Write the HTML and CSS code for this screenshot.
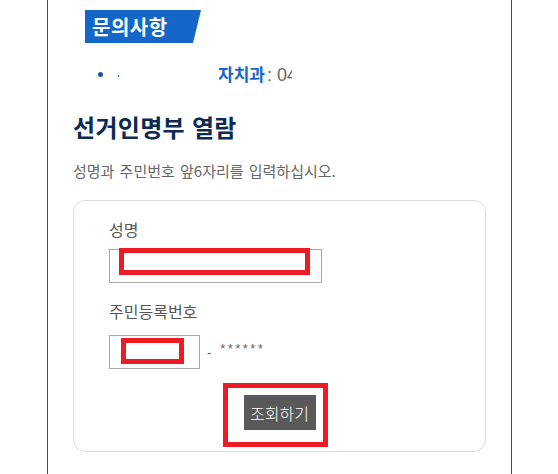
FILE: index.html
```html
<!DOCTYPE html>
<html lang="ko">
<head>
<meta charset="utf-8">
<title>선거인명부 열람</title>
<link rel="stylesheet" href="styles.css">
</head>
<body>
<div class="page">
  <div class="badge">문의사항</div>
  <ul class="info">
    <li class="info-item">
      <span class="bullet"></span>
      <span class="tiny-dot"></span>
      <span class="dept-clip"><span class="dept">자치과</span></span>
      <span class="tel-clip"><span class="tel">: 04</span></span>
    </li>
  </ul>
  <h1 class="title">선거인명부 열람</h1>
  <p class="desc">성명과 주민번호 앞6자리를 입력하십시오.</p>
  <div class="card">
    <div class="field">
      <label class="label">성명</label>
      <div class="input-wrap">
        <div class="input input-name"></div>
        <span class="mark mark-name"></span>
      </div>
    </div>
    <div class="field field-jumin">
      <label class="label">주민등록번호</label>
      <div class="jumin-row">
        <div class="input-wrap">
          <div class="input input-jumin"></div>
          <span class="mark mark-jumin"></span>
        </div>
        <span class="dash">-</span>
        <span class="stars">******</span>
      </div>
    </div>
    <div class="actions">
      <div class="btn-wrap">
        <button class="btn" type="button">조회하기</button>
        <span class="mark mark-btn"></span>
      </div>
    </div>
  </div>
</div>
</body>
</html>
```

FILE: styles.css
```css
* { box-sizing: border-box; }
html, body { margin: 0; padding: 0; background: #fff; }
body {
  font-family: "Noto Sans CJK KR", "Noto Sans", sans-serif;
  color: #555;
}
.page {
  margin-left: 47px;
  width: 465px;
  min-height: 474px;
  border-left: 1px solid #4f4f5a;
  border-right: 1px solid #4f4f5a;
  padding: 10px 0 0 25px;
}
.badge {
  display: block;
  margin-left: 12px;
  width: 116px;
  height: 33px;
  line-height: 33px;
  padding-left: 7px;
  background: #1467c8;
  color: #fff;
  font-size: 20px;
  font-weight: 700;
  letter-spacing: 0.5px;
  clip-path: polygon(0 0, 100% 0, calc(100% - 8px) 100%, 0 100%);
}
.info {
  list-style: none;
  margin: 19px 0 0 0;
  padding: 0;
}
.info-item {
  display: flex;
  align-items: center;
  height: 24px;
  font-size: 16px;
  line-height: 24px;
}
.bullet {
  width: 5px;
  height: 5px;
  border-radius: 50%;
  background: #1f4fb0;
  margin-left: 25px;
}
.tiny-dot {
  width: 1px;
  height: 2px;
  background: #1f4fb0;
  margin-left: 15px;
  margin-top: 4px;
}
.dept-clip {
  display: inline-block;
  overflow: hidden;
  margin-left: 100px;
  white-space: nowrap;
}
.dept {
  display: inline-block;
  color: #1467c8;
  font-weight: 700;
  font-size: 17px;
  margin-left: -1px;
}
.tel-clip {
  display: inline-block;
  width: 27px;
  overflow: hidden;
  white-space: nowrap;
}
.tel {
  font-family: "Liberation Sans", sans-serif;
  color: #666;
  font-size: 18px;
  padding-left: 2px;
}
.title {
  margin: 25px 0 0 0;
  font-size: 24px;
  line-height: 32px;
  font-weight: 700;
  color: #0c2a52;
  letter-spacing: 0.3px;
}
.desc {
  margin: 18px 0 0 0;
  font-size: 15px;
  line-height: 20px;
  color: #666;
  word-spacing: 1px;
}
.card {
  margin-top: 19px;
  width: 413px;
  height: 252px;
  border: 1px solid #dcdcdc;
  border-radius: 12px;
  padding: 18px 0 0 35px;
}
.label {
  display: block;
  font-size: 16px;
  line-height: 20px;
  color: #555;
}
.input-wrap {
  position: relative;
  display: inline-block;
}
.input {
  border: 1px solid #aaa;
  height: 34px;
  background: #fff;
}
.field .input-wrap { margin-top: 10px; }
.input-name { width: 213px; }
.field-jumin { margin-top: 13px; }
.jumin-row {
  display: flex;
  align-items: center;
}
.jumin-row .input-wrap { margin-top: 14px; }
.input-jumin { width: 91px; }
.dash {
  margin-left: 7px;
  margin-top: 14px;
  font-size: 13px;
  color: #555;
  font-family: "Liberation Sans", sans-serif;
}
.stars {
  margin-left: 9px;
  margin-top: 6px;
  font-size: 13px;
  color: #666;
  letter-spacing: 2.4px;
  font-family: "Liberation Sans", sans-serif;
}
.actions {
  display: flex;
  justify-content: center;
  padding-right: 35px;
  margin-top: 26px;
}
.btn-wrap {
  position: relative;
}
.btn {
  display: block;
  width: 72px;
  height: 35px;
  border: 0;
  background: #595959;
  color: #fff;
  font-family: "Noto Sans CJK KR", sans-serif;
  font-size: 16px;
  font-weight: 300;
  padding: 0;
}
.mark {
  position: absolute;
  border: 5px solid #ed1c24;
  pointer-events: none;
}
.mark-name { left: 10px; top: -1px; width: 191px; height: 27px; }
.mark-jumin { left: 12px; top: 3px; width: 63px; height: 26px; }
.mark-btn { left: -21px; top: -12px; width: 105px; height: 64px; }
```
